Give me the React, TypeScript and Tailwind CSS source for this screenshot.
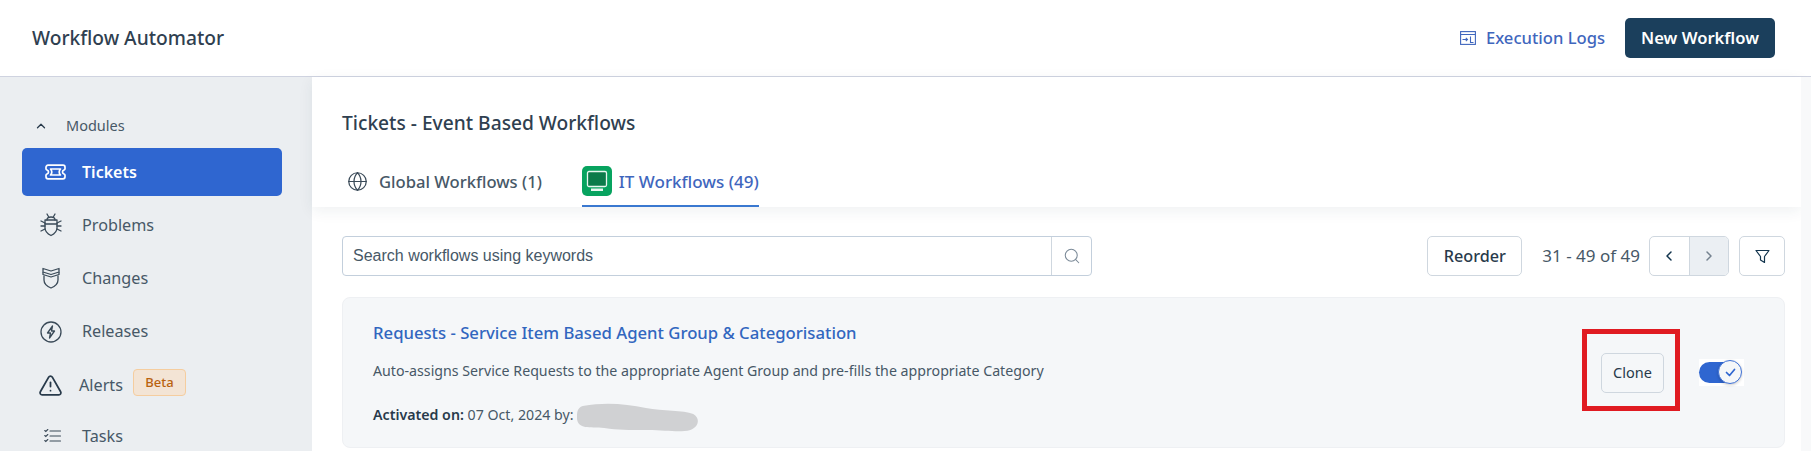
import React from "react";
import { ChevronUp, ChevronLeft, ChevronRight, Globe, Search, TriangleAlert } from "lucide-react";

const font = "font-['Noto_Sans',sans-serif]";

const TicketIcon = () => (
  <svg width="23" height="16" viewBox="0 0 23 16" fill="none" stroke="currentColor" strokeWidth="1.7" strokeLinejoin="round">
    <path d="M4 1.200h15a2 2 0 0 1 2 2v1.600c0 .6-.5 1-1 1.200-1 .4-1.500 1.100-1.500 2s.5 1.600 1.500 2c.5.2 1 .6 1 1.200v1.600a2 2 0 0 1-2 2H4a2 2 0 0 1-2-2v-1.600c0-.6.5-1 1-1.200 1-.4 1.500-1.100 1.500-2S4 6.400 3 6c-.5-.2-1-.6-1-1.200V3.200a2 2 0 0 1 2-2Z" />
    <path d="M6.500 5h10c-1 1-1.300 2-1.300 3s.3 2 1.300 3h-10c1-1 1.300-2 1.300-3s-.3-2-1.300-3Z" />
  </svg>
);
const BugIcon = () => (
  <svg width="22" height="24" viewBox="0 0 22 24" fill="none" stroke="currentColor" strokeWidth="1.3" strokeLinejoin="round" strokeLinecap="round">
    <path d="M5 7h12v8c0 3.500-3 6-6 7.500C8 21 5 18.500 5 15V7Z" />
    <path d="M5 11h12M7 7c0-2 2-3 4-3s4 1 4 3M7 1l2 3.500M15 1l-2 3.500M5 10 1 8M5 13H1M5 16l-4 2M17 10l4-2M17 13h4M17 16l4 2" />
  </svg>
);
const ShieldIcon = () => (
  <svg width="20" height="22" viewBox="0 0 20 22" fill="none" stroke="currentColor" strokeWidth="1.3" strokeLinejoin="round">
    <path d="M2 1.500 10 4l8-2.500V5l-8 2.500L2 5V1.500Z" />
    <path d="M2 5v2.500L10 10l8-2.500V5" />
    <path d="M3 8.500V13c0 3.500 3.500 6.500 7 8 3.500-1.500 7-4.500 7-8V8.500" />
  </svg>
);
const BoltIcon = () => (
  <svg width="22" height="22" viewBox="0 0 22 22" fill="none" stroke="currentColor" strokeWidth="1.3" strokeLinejoin="round">
    <circle cx="11" cy="11" r="10" />
    <path d="M12.500 5 7.500 12h3l-1 5 5-7h-3l1-5Z" />
  </svg>
);
const TasksIcon = () => (
  <svg width="17" height="14" viewBox="0 0 17 14" fill="none" stroke="currentColor" strokeWidth="1.1" strokeLinecap="round">
    <path d="M6 2h10.500M6 7h10.500M6 12h10.500" />
    <path d="m.8 1.500 1 1 2-2M.8 6.500l1 1 2-2M.8 11.500l1 1 2-2" />
  </svg>
);
const LogsIcon = () => (
  <svg width="16" height="14" viewBox="0 0 16 14" fill="none" stroke="currentColor" strokeWidth="1.1">
    <rect x="0.600" y="0.600" width="14.800" height="12.800" />
    <path d="M.6 3.500h14.800M10.500 5.500v6h3M2.500 8.500h5M5.800 6.800l1.700 1.700-1.700 1.700" />
  </svg>
);
const MonitorIcon = () => (
  <svg width="30" height="30" viewBox="0 0 30 30">
    <rect width="30" height="30" rx="5" fill="#07a35f" />
    <rect x="5.500" y="5.500" width="19" height="15" rx="1.500" fill="#0c7b4a" stroke="#e9f7f0" strokeWidth="1.300" />
    <rect x="9" y="22.500" width="12" height="2.500" fill="#e9f7f0" />
  </svg>
);
const FunnelIcon = () => (
  <svg width="15" height="15" viewBox="0 0 15 15" fill="none" stroke="#12344d" strokeWidth="1.200" strokeLinejoin="round">
    <path d="M1 1.500h13L9.500 7.500v6l-4-2.500V7.500L1 1.500Z" />
  </svg>
);

const rows: { label: string; icon: React.ReactNode; h: string }[] = [
  { label: "Problems", icon: <BugIcon />, h: "h-[52px]" },
  { label: "Changes", icon: <ShieldIcon />, h: "h-[54px]" },
  { label: "Releases", icon: <BoltIcon />, h: "h-[53px]" },
];

export default function App() {
  return (
    <div className={`${font} relative h-[451px] w-[1811px] overflow-hidden bg-white text-[#283a4b]`}>
      <header className="flex h-[77px] items-center border-b border-[#cfd3e0] pl-[32px] pr-[36px]">
        <h1 className="text-[19.200px] font-medium text-[#2f4050]">Workflow Automator</h1>
        <a className="ml-auto flex items-center gap-[10px] text-[16.600px] font-medium text-[#3f66bd]">
          <LogsIcon />
          Execution Logs
        </a>
        <button className="ml-[20px] h-[40px] w-[150px] rounded-[5px] bg-[#1b3f5c] text-[16.600px] font-semibold text-white">New Workflow</button>
      </header>

      <div className="flex h-[374px]">
        <aside className="w-[312px] shrink-0 bg-[#ebeef1] px-[22px] pt-[40px]">
          <div className="flex h-[18px] items-center gap-[18px] pl-[12px] text-[14.500px] text-[#475867]">
            <ChevronUp size={14} strokeWidth={2.2} className="text-[#283a4b]" />
            Modules
          </div>
          <div className="mb-[3px] mt-[13px] flex h-[48px] w-[260px] items-center gap-[15px] rounded-[5px] bg-[#2f66d0] pl-[22px] text-[16px] font-semibold text-white">
            <TicketIcon />
            Tickets
          </div>
          {rows.map((r) => (
            <div key={r.label} className={`flex ${r.h} items-center text-[16.200px] text-[#475867]`}>
              <span className="flex w-[60px] justify-center pl-[3px] pr-[6px] text-[#3a4a58]">{r.icon}</span>
              {r.label}
            </div>
          ))}
          <div className="flex h-[54px] items-center text-[16.200px] text-[#475867]">
            <span className="flex w-[57px] justify-center pl-[5px] pr-[6px] text-[#283a4b]">
              <TriangleAlert size={25} strokeWidth={1.700} />
            </span>
            Alerts
            <span className="mb-[5px] ml-[10px] flex h-[27px] w-[53px] items-center justify-center rounded-[4px] border border-[#f5cd9f] bg-[#f3e4d5] text-[13px] font-medium text-[#b9620f]">Beta</span>
          </div>
          <div className="flex h-[48px] items-center text-[16.200px] text-[#475867]">
            <span className="flex w-[60px] justify-center pl-[3px] pr-[2px] text-[#3a4a58]"><TasksIcon /></span>
            Tasks
          </div>
        </aside>

        <main className="flex min-w-0 flex-1 flex-col">
          <section className="h-[130px] bg-white pl-[30px] pt-[34px] shadow-[0_4px_14px_rgba(24,50,71,0.07)]">
            <h2 className="text-[19.200px] font-medium leading-[24px] text-[#2f4050]">Tickets - Event Based Workflows</h2>
            <div className="mt-[31px] flex h-[41px]">
              <div className="flex h-[40px] items-start gap-[11px] pl-[5px] pt-[4px] text-[16.600px] font-medium text-[#475867]">
                <Globe size={21} strokeWidth={1.400} className="mt-[1px] text-[#3a4a58]" />
                Global Workflows (1)
              </div>
              <div className="ml-[40px] flex h-[41px] items-start gap-[7px] border-b-2 border-[#3a78d0] text-[17px] font-medium text-[#3f66bd]">
                <MonitorIcon />
                <span className="pt-[3px]">IT Workflows (49)</span>
              </div>
            </div>
          </section>

          <div className="mt-[29px] flex h-[40px] items-stretch pl-[30px] pr-[16px]">
            <div className="flex w-[750px] rounded-[4px] border border-[#c3cfdc] bg-white">
              <span className="flex-1 self-center pl-[10px] font-['Liberation_Sans',sans-serif] text-[16px] text-[#475867]">Search workflows using keywords</span>
              <span className="flex w-[40px] items-center justify-center border-l border-[#cfd7df] text-[#7b8a98]"><Search size={18} strokeWidth={1.400} /></span>
            </div>
            <button className="ml-auto w-[95px] rounded-[5px] border border-[#cfd7df] bg-white text-[16.200px] font-medium text-[#283a4b]">Reorder</button>
            <span className="ml-[20px] mr-[1px] self-center text-[17px] text-[#475867]">31 - 49 of 49</span>
            <div className="ml-[8px] flex w-[80px] overflow-hidden rounded-[5px] border border-[#cfd7df]">
              <span className="flex flex-1 items-center justify-center text-[#12344d]"><ChevronLeft size={16} strokeWidth={2.200} /></span>
              <span className="flex flex-1 items-center justify-center border-l border-[#cfd7df] bg-[#ebeff3] text-[#74828f]"><ChevronRight size={16} strokeWidth={2.200} /></span>
            </div>
            <span className="ml-[10px] flex w-[46px] items-center justify-center rounded-[5px] border border-[#cfd7df] bg-white"><FunnelIcon /></span>
          </div>

          <article className="ml-[30px] mr-[16px] mt-[21px] flex h-[151px] rounded-[8px] border border-[#eef0f3] bg-[#f5f7f9] pl-[30px] pr-[40px]">
            <div className="flex-1 pt-[23px]">
              <h3 className="text-[16.700px] font-medium leading-[24px] text-[#3166bf]">Requests - Service Item Based Agent Group &amp; Categorisation</h3>
              <p className="mt-[17px] text-[14.200px] leading-[18px] text-[#475867]">Auto-assigns Service Requests to the appropriate Agent Group and pre-fills the appropriate Category</p>
              <p className="mt-[26px] text-[14.200px] leading-[18px] text-[#475867]"><span className="font-semibold text-[#283a4b]">Activated on:</span> 07 Oct, 2024 by:</p>
            </div>
            <div className="flex items-center gap-[35px]">
              <button className="h-[40px] w-[63px] rounded-[5px] border border-[#cfd7df] bg-[#f5f7f9] text-[14.500px] text-[#283a4b]">Clone</button>
              <div className="flex h-[27px] w-[45px] items-center bg-white">
                <div className="relative h-[21px] w-[40px] rounded-full bg-[#2f66d0]">
                  <div className="absolute -right-[3px] -top-[2px] flex h-[24px] w-[24px] items-center justify-center rounded-full border border-[#3f72d6] bg-[#f5f7f9] shadow-[0_1px_3px_rgba(0,0,0,0.2)]">
                    <svg width="11" height="9" viewBox="0 0 11 9" fill="none" stroke="#2f66d0" strokeWidth="1.700" strokeLinecap="round" strokeLinejoin="round"><path d="m1.500 4.500 3 3 5-6" /></svg>
                  </div>
                </div>
              </div>
            </div>
          </article>
        </main>

        <div className="w-[10px] shrink-0 bg-[#f8f9fa]" />
      </div>

      <svg className="absolute left-[577px] top-[403px]" width="122" height="29" viewBox="0 0 85 29" preserveAspectRatio="none">
        <path d="M4 3C20-1 34 1 48 5c12 3 26 2 33 6 5 4 4 13-2 16-8 3-16 0-30 0-14 0-20 0-30-2C8 24 1 26 0 16 0 9 0 5 4 3Z" fill="#d0d1d3" />
      </svg>
      <div className="absolute left-[1582px] top-[329px] h-[82px] w-[98px] border-[5px] border-[#e01b22]" />
    </div>
  );
}
